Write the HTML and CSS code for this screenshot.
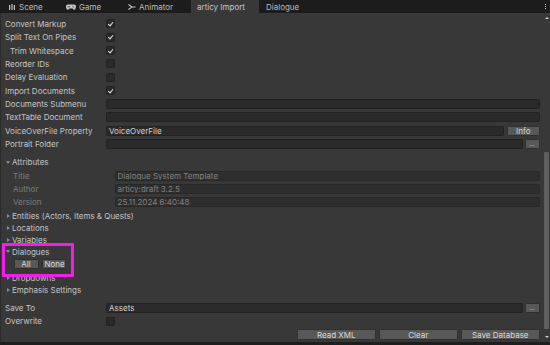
FILE: index.html
```html
<!DOCTYPE html>
<html>
<head>
<meta charset="utf-8">
<link rel="stylesheet" href="styles.css">
</head>
<body>
<div class="window">
  <div class="tabbar">
    <div class="tab tab-scene">
      <svg class="ticon" width="6" height="6" viewBox="0 0 6 6"><rect x="0" y="1" width="1.2" height="5" fill="#c4c4c4"/><rect x="2.4" y="0" width="1.2" height="6" fill="#c4c4c4"/><rect x="4.8" y="1" width="1.2" height="5" fill="#c4c4c4"/></svg>
      <span>Scene</span>
    </div>
    <div class="tab tab-game">
      <svg class="ticon" width="10" height="6" viewBox="0 0 10 6"><path d="M2 0.5h6a2 2 0 0 1 2 2.5l-0.6 2a1.2 1.2 0 0 1-2 .4L6.6 4.5H3.4L2.6 5.4a1.2 1.2 0 0 1-2-.4L0 3a2 2 0 0 1 2-2.5z" fill="#c4c4c4"/><rect x="1.8" y="2.4" width="2" height="0.8" fill="#1e1e1e"/><circle cx="7.2" cy="2.8" r="0.6" fill="#1e1e1e"/></svg>
      <span>Game</span>
    </div>
    <div class="tab tab-anim">
      <svg class="ticon" width="8" height="6" viewBox="0 0 8 6"><path d="M0.5 0.5 L4 3 L0.5 5.5 M4 3 H7.5" stroke="#c4c4c4" stroke-width="1.1" fill="none"/></svg>
      <span>Animator</span>
    </div>
    <div class="tab active"><span>articy Import</span></div>
    <div class="tab tab-dlg"><span>Dialogue</span></div>
    <div class="spacer"></div>
    <div class="kebab"><i></i><i></i><i></i></div>
  </div>

  <div class="main">
    <div class="content">
      <div class="row"><span class="label">Convert Markup</span><span class="check on"></span></div>
      <div class="row"><span class="label">Split Text On Pipes</span><span class="check on"></span></div>
      <div class="row"><span class="label sub">Trim Whitespace</span><span class="check on"></span></div>
      <div class="row"><span class="label">Reorder IDs</span><span class="check"></span></div>
      <div class="row"><span class="label">Delay Evaluation</span><span class="check"></span></div>
      <div class="row"><span class="label">Import Documents</span><span class="check on"></span></div>
      <div class="row"><span class="label">Documents Submenu</span><span class="field"></span></div>
      <div class="row"><span class="label">TextTable Document</span><span class="field"></span></div>
      <div class="row"><span class="label">VoiceOverFile Property</span><span class="fieldgroup"><span class="field">VoiceOverFile</span><span class="btn btn-info">Info</span></span></div>
      <div class="row"><span class="label">Portrait Folder</span><span class="fieldgroup"><span class="field"></span><span class="btn btn-dots">...</span></span></div>

      <div class="row fold-row attr"><span class="tri down"></span><span>Attributes</span></div>
      <div class="row subrow"><span class="label dim">Title</span><span class="field dimfield">Dialogue System Template</span></div>
      <div class="row subrow"><span class="label dim">Author</span><span class="field dimfield">articy:draft 3.2.5</span></div>
      <div class="row subrow"><span class="label dim">Version</span><span class="field dimfield">25.11.2024 6:40:48</span></div>

      <div class="fold first"><span class="tri"></span><span>Entities (Actors, Items &amp; Quests)</span></div>
      <div class="fold"><span class="tri"></span><span>Locations</span></div>
      <div class="fold"><span class="tri"></span><span>Variables</span></div>
      <div class="fold"><span class="tri down"></span><span>Dialogues</span></div>
      <div class="row btnrow"><span class="btn small">All</span><span class="btn small">None</span></div>
      <div class="row fold-row"><span class="tri"></span><span>Dropdowns</span></div>
      <div class="fold"><span class="tri"></span><span>Emphasis Settings</span></div>

      <div class="row saveto"><span class="label">Save To</span><span class="fieldgroup"><span class="field">Assets</span><span class="btn btn-dots">...</span></span></div>
      <div class="row"><span class="label">Overwrite</span><span class="check"></span></div>
      <div class="row actions"><span class="btn act">Read XML</span><span class="btn act">Clear</span><span class="btn act">Save Database</span></div>

      <div class="highlight"></div>
    </div>
    <div class="scrollbar">
      <div class="arrow up"></div>
      <div class="track"><div class="thumb"></div></div>
      <div class="arrow dn"></div>
    </div>
  </div>
  <div class="bottombar"></div>
</div>
</body>
</html>
```

FILE: styles.css
```css
* { box-sizing: border-box; }
html, body { margin: 0; padding: 0; }
body {
  width: 550px;
  height: 345px;
  overflow: hidden;
  background: #383838;
  font-family: Inter, "Liberation Sans", sans-serif;
  font-size: 8px;
  color: #c4c4c4;
}
.window {
  width: 550px;
  height: 345px;
  display: flex;
  flex-direction: column;
}
.tabbar {
  height: 13px;
  background: #1c1c1c;
  display: flex;
  align-items: stretch;
  flex: none;
}
.tab {
  display: flex;
  align-items: center;
  gap: 3px;
  color: #bdbdbd;
  white-space: nowrap;
}
.ticon { flex: none; }
.tab-scene { padding-left: 9px; width: 66px; gap: 4px; }
.tab-game { width: 61px; gap: 3px; }
.tab-anim { width: 64px; padding-left: 1px; gap: 3px; }
.tab.active {
  background: #383838;
  width: 68px;
  padding-left: 6px;
  color: #c8c8c8;
}
.tab-dlg { padding-left: 7px; }
.spacer { flex: 1; }
.kebab {
  width: 9px;
  display: flex;
  flex-direction: column;
  align-items: center;
  justify-content: center;
  gap: 1px;
}
.kebab i {
  display: block;
  width: 1.3px;
  height: 1.3px;
  background: #c4c4c4;
}

.main {
  flex: 1;
  display: flex;
  min-height: 0;
  border-left: 1px solid #2c2c2c;
}
.content {
  position: relative;
  flex: 1;
  padding: 4.33px 3.5px 0 4px;
  display: flex;
  flex-direction: column;
}
.row {
  height: 13.33px;
  display: grid;
  grid-template-columns: 101px 1fr;
  align-items: center;
  flex: none;
}
.label {
  white-space: nowrap;
  overflow: hidden;
}
.label.sub { padding-left: 5px; }
.label.dim { color: #7b7b7b; }
.check {
  width: 9px;
  height: 9px;
  background: #2a2a2a;
  border: 1px solid #222;
  border-radius: 1.5px;
  position: relative;
}
.check.on::after {
  content: "";
  position: absolute;
  left: 2.4px;
  top: 0.6px;
  width: 2px;
  height: 4.4px;
  border: solid #e6e6e6;
  border-width: 0 1.1px 1.1px 0;
  transform: rotate(40deg);
}
.field {
  height: 10px;
  background: #2a2a2a;
  border: 1px solid #222;
  border-radius: 1.5px;
  display: flex;
  align-items: center;
  padding-left: 2px;
  color: #d2d2d2;
  white-space: nowrap;
  overflow: hidden;
}
.fieldgroup {
  display: flex;
  align-items: center;
  gap: 2px;
}
.fieldgroup .field { flex: 1; }
.btn {
  height: 10px;
  background: #585858;
  border: 1px solid #303030;
  border-radius: 1.5px;
  color: #d8d8d8;
  display: flex;
  align-items: center;
  justify-content: center;
  white-space: nowrap;
  overflow: hidden;
}
.btn-info { width: 32.5px; margin-left: 1.5px; }
.btn-dots { width: 15px; height: 9.5px; font-size: 6px; padding-bottom: 1px; }

.fold-row, .fold {
  display: flex;
  align-items: center;
  white-space: nowrap;
}
.fold { height: 12px; flex: none; }
.fold.first { margin-top: 0.67px; }
.attr { margin-top: 5px; }
.tri {
  width: 0;
  height: 0;
  border-top: 2.5px solid transparent;
  border-bottom: 2.5px solid transparent;
  border-left: 3.5px solid #8a8a8a;
  margin-left: 1.5px;
  margin-right: 2.5px;
}
.tri.down {
  border-left: 2.5px solid transparent;
  border-right: 2.5px solid transparent;
  border-top: 3.5px solid #8a8a8a;
  border-bottom: 0;
  margin-left: 1px;
  margin-right: 2px;
}
.subrow { padding-left: 8px; }
.subrow .field { margin-left: 0.5px; }
.dimfield { color: #808080; background: #2e2e2e; border-color: #282828; }

.btnrow {
  display: flex;
  gap: 3px;
  padding-left: 8.5px;
}
.btn.small { width: 25px; height: 9.5px; border-color: #2e2e2e; color: #dcdcdc; }
.btn.small + .btn.small { width: 24.5px; justify-content: flex-start; padding-left: 2px; }

.saveto { margin-top: 5px; }
.actions {
  display: flex;
  justify-content: flex-end;
  gap: 3.5px;
}
.btn.act { width: 78.5px; height: 11px; }

.highlight {
  position: absolute;
  left: 0.7px;
  top: 230px;
  width: 72.5px;
  height: 33.5px;
  border: 3px solid #f41ce8;
}

.scrollbar {
  width: 7px;
  flex: none;
  display: flex;
  flex-direction: column;
  align-items: center;
}
.arrow { height: 10px; flex: none; display: flex; align-items: center; justify-content: center; }
.arrow.up::after {
  content: "";
  border-left: 2.5px solid transparent;
  border-right: 2.5px solid transparent;
  border-bottom: 2.5px solid #d0d0d0;
}
.arrow.dn::after {
  content: "";
  border-left: 2.5px solid transparent;
  border-right: 2.5px solid transparent;
  border-top: 2.5px solid #d0d0d0;
}
.track { flex: 1; width: 100%; display: flex; flex-direction: column; align-items: center; }
.thumb {
  margin-top: 129px;
  width: 5.5px;
  height: 177px;
  background: #5e5e5e;
  border-radius: 1px;
}
.bottombar {
  height: 3px;
  flex: none;
  background: #1e1e1e;
}
```
